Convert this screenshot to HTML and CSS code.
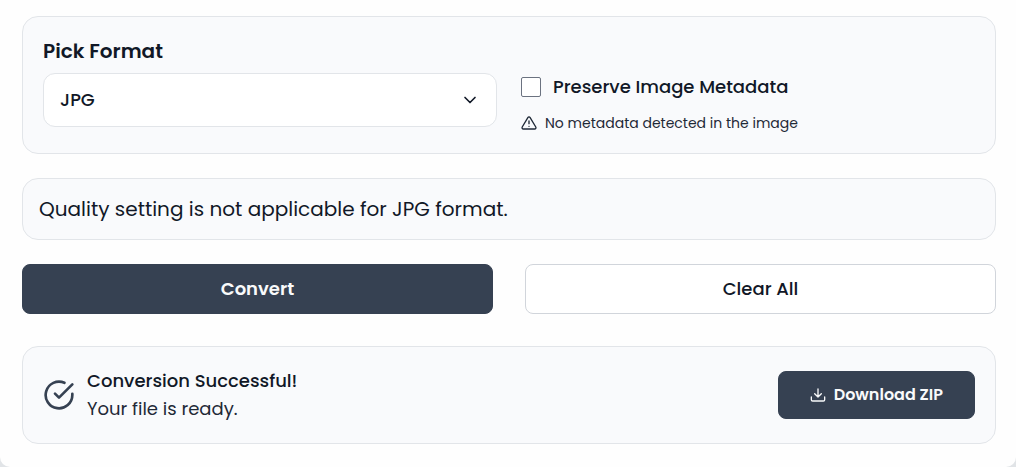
FILE: index.html
```html
<!DOCTYPE html>
<html lang="en">
<head>
    <meta charset="UTF-8">
    <meta name="viewport" content="width=device-width, initial-scale=1.0">
    <title>Image Converter</title>
    <link rel="stylesheet" href="styles.css">
</head>
<body>
    <main class="sheet">
        <section class="card options">
            <div class="format">
                <label class="format-label" for="format">Pick Format</label>
                <div class="select-wrap">
                    <select id="format" name="format">
                        <option>JPG</option>
                        <option>PNG</option>
                        <option>WEBP</option>
                    </select>
                    <svg class="chevron" viewBox="0 0 24 24" aria-hidden="true"><path d="m6 9 6 6 6-6"/></svg>
                </div>
            </div>
            <div class="metadata">
                <label class="check-row" for="preserve">
                    <input type="checkbox" id="preserve" name="preserve">
                    <span>Preserve Image Metadata</span>
                </label>
                <p class="hint">
                    <svg class="icon-small" viewBox="0 0 24 24" aria-hidden="true">
                        <path d="M10.29 3.86 1.82 18a2 2 0 0 0 1.71 3h16.94a2 2 0 0 0 1.71-3L13.71 3.86a2 2 0 0 0-3.42 0z"/>
                        <path d="M12 9v4M12 17h.01"/>
                    </svg>
                    <span>No metadata detected in the image</span>
                </p>
            </div>
        </section>

        <section class="card notice">
            <p>Quality setting is not applicable for JPG format.</p>
        </section>

        <div class="actions">
            <button type="button" class="btn btn-dark">Convert</button>
            <button type="button" class="btn btn-light">Clear All</button>
        </div>

        <section class="card result">
            <svg class="icon-large" viewBox="0 0 24 24" aria-hidden="true">
                <path d="M22 11.08V12a10 10 0 1 1-5.93-9.14"/>
                <path d="m22 4-10 10.01-3-3"/>
            </svg>
            <div class="result-text">
                <p class="result-title">Conversion Successful!</p>
                <p>Your file is ready.</p>
            </div>
            <button type="button" class="btn btn-dark btn-download">
                <svg class="icon-small" viewBox="0 0 24 24" aria-hidden="true">
                    <path d="M22 15v4a2 2 0 0 1-2 2H4a2 2 0 0 1-2-2v-4M7 10l5 5 5-5M12 15V3"/>
                </svg>
                <span>Download ZIP</span>
            </button>
        </section>
    </main>
</body>
</html>
```
FILE: styles.css
```css
* {
    box-sizing: border-box;
}
body {
    margin: 0;
    background: #e1e4e7;
    color: #111827;
    font-family: Poppins, Inter, sans-serif;
    font-size: 18px;
    line-height: 28px;
}
p {
    margin: 0;
}
svg {
    flex-shrink: 0;
    fill: none;
    stroke: currentColor;
    stroke-width: 2;
    stroke-linecap: round;
    stroke-linejoin: round;
}
.sheet {
    min-height: 100vh;
    padding: 16px 20px 23px 22px;
    background: #fefefe;
    border-radius: 0 0 10px 10px;
}
.card {
    padding: 20px;
    background: #f9fafc;
    border: 1px solid #e2e5e9;
    border-radius: 16px;
}
.options {
    display: grid;
    grid-template-columns: 1fr 1fr;
    gap: 24px;
}
.format-label {
    display: block;
    margin-bottom: 8px;
    font-size: 20px;
    font-weight: 600;
}
.select-wrap {
    position: relative;
}
select {
    display: block;
    appearance: none;
    width: 100%;
    height: 54px;
    padding: 0 16px;
    border: 1px solid #e2e5e9;
    border-radius: 12px;
    background: #fff;
    color: #111827;
    font: inherit;
    font-weight: 500;
}
.chevron {
    position: absolute;
    top: 17px;
    right: 17px;
    width: 20px;
    height: 20px;
    pointer-events: none;
}
.metadata {
    padding-top: 36px;
}
.check-row {
    display: flex;
    align-items: center;
    gap: 12px;
    font-weight: 500;
}
input[type="checkbox"] {
    appearance: none;
    width: 20px;
    height: 20px;
    margin: 0;
    border: 1px solid #6b7280;
    border-radius: 2px;
    background: #fff;
}
input[type="checkbox"]:checked {
    background: #364152;
}
.hint {
    display: flex;
    align-items: center;
    gap: 8px;
    margin-top: 12px;
    color: #1f2937;
    font-size: 14px;
    line-height: 20px;
}
.icon-small {
    width: 16px;
    height: 16px;
}
.notice {
    margin-top: 24px;
    padding: 16px;
    font-size: 20px;
}
.actions {
    display: grid;
    grid-template-columns: 1fr 1fr;
    gap: 32px;
    margin: 24px 0 32px;
}
.btn {
    height: 50px;
    border: 1px solid #364152;
    border-radius: 8px;
    font: inherit;
    font-weight: 500;
    cursor: pointer;
}
.btn-dark {
    background: #364152;
    color: #f9fafb;
    font-weight: 600;
}
.btn-light {
    background: #fff;
    border-color: #d1d5db;
    color: #111827;
}
.result {
    display: flex;
    align-items: center;
    gap: 12px;
}
.icon-large {
    width: 32px;
    height: 32px;
    color: #364152;
}
.result-text {
    flex: 1;
    color: #1f2937;
}
.result-title {
    color: #111827;
    font-weight: 500;
}
.btn-download {
    display: flex;
    align-items: center;
    gap: 8px;
    height: 48px;
    padding: 0 31px;
    font-size: 16px;
}
```
